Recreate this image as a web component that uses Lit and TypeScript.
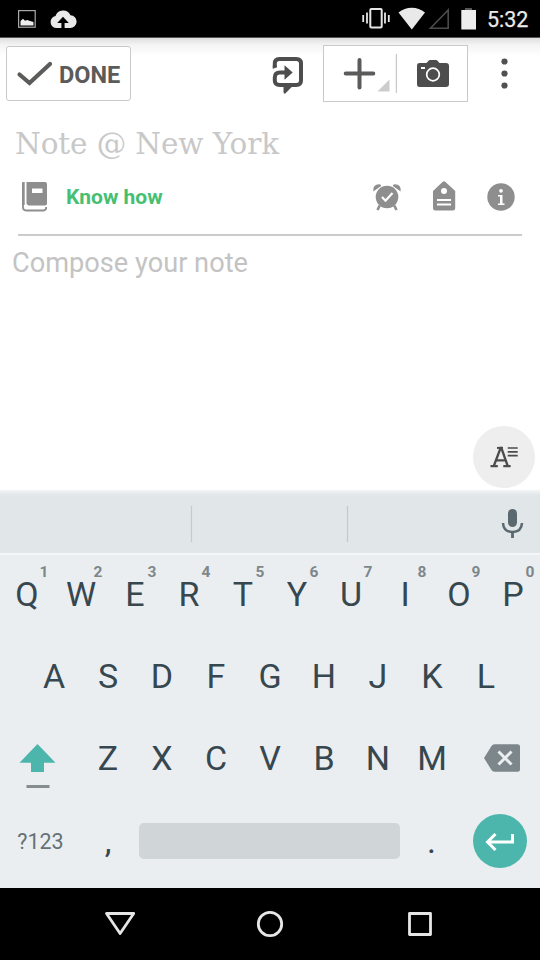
import { LitElement, html, svg, css, type TemplateResult } from "lit";
import { customElement, property } from "lit/decorators.js";

const icon = (x: number, y: number, w: number, h: number, body: TemplateResult) =>
  html`<svg width=${w} height=${h} viewBox="${x} ${y} ${w} ${h}" fill="none" aria-hidden="true">${body}</svg>`;

const base = css`
  :host { box-sizing: border-box; flex: none; }
  * { box-sizing: border-box; }
  svg { display: block; flex: none; }
`;

@customElement("status-bar")
class StatusBar extends LitElement {
  static styles = [base, css`
    :host { display: flex; height: 38px; background: #000; border-bottom: 1px solid #555; color: #e9e9e9; }
    .gap { flex: 1; }
    .time { width: 54px; font: 400 21.5px/38px Roboto, sans-serif; padding-left: 1px; padding-top: 1px; -webkit-text-stroke: .25px #e9e9e9; }
  `];
  render() {
    return html`
      ${icon(0, 0, 90, 37, svg`
        <rect x="18.6" y="10.6" width="16.6" height="16.6" stroke="#aaa" stroke-width="1.2"/>
        <path d="M20.500 25.500v-4.500l2.500-2.300 2 2 2.200-.7 2.800 1 3.500 1v3.500z" fill="#eee"/>
        <path d="M56.500 28a6 6 0 0 1-1-11.900 8 8 0 0 1 15-.9A6.400 6.400 0 0 1 70 28h-5.400v-5h4.200l-5.800-6.300-5.800 6.300h4.200v5z" fill="#e9e9e9"/>`)}
      <div class="gap"></div>
      ${icon(355, 0, 131, 37, svg`
        <rect x="370.300" y="9" width="11.400" height="18.600" rx="1" stroke="#e5e5e5" stroke-width="2"/>
        <path d="M367 12.500v11M385 12.500v11M363.200 15v7M388.800 15v7" stroke="#e5e5e5" stroke-width="1.800"/>
        <path d="M398.500 12.600a20.500 20.500 0 0 1 26.500 0L411.800 29.400z" fill="#e9e9e9"/>
        <path d="M448.200 10v18.300h-17.700z" stroke="#4b4b4b" stroke-width="1.600"/>
        <path d="M465 8h7v3h-7z" fill="#555"/><path d="M461.300 10h14.700v19.500h-14.700z" fill="#eee"/>`)}
      <div class="time">5:32</div>`;
  }
}

@customElement("note-toolbar")
class NoteToolbar extends LitElement {
  static styles = [base, css`
    :host { display: flex; align-items: flex-start; height: 74px; padding: 7px 0 0 6px; background: linear-gradient(#dedede, #f4f4f4 7px, #fff 18px); }
    .done { display: flex; align-items: center; width: 125px; height: 55px; margin-top: 1px; border: 1px solid #c9c9c9; border-radius: 3px; background: #fff; color: #5b5b59; font: 700 23.5px/50px Roboto, sans-serif; padding-left: 9px; gap: 5px; }
    .done span { padding-top: 2px; }
    .gap { flex: 1; }
    .group { display: flex; position: relative; width: 145px; height: 57px; border: 1.5px solid #c9c9c9; background: #fff; margin-left: 19px; }
    .more { margin-right: 24px; margin-left: 26px; }
  `];
  render() {
    return html`
      <div class="done">${icon(16, 58, 38, 32, svg`<path d="M19.500 74.500l10 8.500 20.500-19" stroke="#5b5b59" stroke-width="4.200" stroke-linecap="round" stroke-linejoin="miter"/>`)}<span>DONE</span></div>
      <div class="gap"></div>
      ${icon(272, 45, 32, 57, svg`
        <path d="M274.800 67.500v-4q0-4.500 4.500-4.500h17q4.700 0 4.700 4.500v17q0 4.500-4.700 4.500h-16.500q-5 0-5-4.500v-3q0-5 5-5h6" stroke="#4d4d4d" stroke-width="4"/>
        <path d="M272.800 65.500h4v1.500l-4 2z" fill="#4d4d4d"/>
        <path d="M284.500 65.300l8.200 7.200-8.200 7.200z" fill="#4d4d4d"/><path d="M283.500 86h9.200l-7.700 7.700q-1.500 0-1.500-1.700z" fill="#4d4d4d"/>`)}
      <div class="group">${icon(324, 46, 142, 54, svg`
        <path d="M359.500 60v27.500M345.700 73.600h27.600" stroke="#5b5b59" stroke-width="4" stroke-linecap="round"/>
        <path d="M389.500 79.500v12h-12z" fill="#ccc"/>
        <path d="M396.400 54v39" stroke="#c9c9c9" stroke-width="1.300"/>
        <path d="M419.500 63h7l2-2.200q.5-.8 1.500-.8h6q1 0 1.500.8l2 2.200h6.500q3 0 3 3v18q0 3-3 3h-26.500q-2.500 0-2.500-3V66q0-3 2.500-3z" fill="#4d4d4d"/>
        <circle cx="433" cy="74.500" r="6.300" stroke="#fff" stroke-width="1.700"/><path d="M421 67h4v2h-4z" fill="#fff"/>`)}</div>
      <div class="more">${icon(494, 45, 22, 57, svg`<g fill="#505050"><circle cx="504.500" cy="61.500" r="3.100"/><circle cx="504.500" cy="73.500" r="3.100"/><circle cx="504.500" cy="85.500" r="3.100"/></g>`)}</div>`;
  }
}

@customElement("note-editor")
class NoteEditor extends LitElement {
  static styles = [base, css`
    :host { display: flex; flex-direction: column; position: relative; height: 378px; background: #fff; font-family: Roboto, sans-serif; }
    .title { height: 64px; padding-left: 15px; font: 400 29.5px/64px "DejaVu Serif", serif; letter-spacing: -.12px; color: #c8c8c8; white-space: nowrap; }
    .meta { display: flex; align-items: center; height: 60px; margin: 0 18px; padding-bottom: 16px; border-bottom: 2px solid #cbcbcb; }
    .book { flex: 1; padding-left: 16px; font-weight: 700; font-size: 21px; color: #45c072; }
    .body { padding: 8px 12px; font-size: 27.200px; line-height: 38px; color: #c3c3c3; white-space: nowrap; }
    .format { position: absolute; right: 5px; bottom: 2px; width: 62px; height: 62px; border-radius: 50%; background: #eee; display: flex; }
  `];
  render() {
    return html`
      <div class="title">Note @ New York</div>
      <div class="meta">
        ${icon(18, 179, 32, 36, svg`
          <path d="M22 183q0-1 1-1h1.700v23H22zM26.500 182H45q2 0 2 2v19.500q0 2-2 2H28.500L26.500 204z" fill="#8e8e8e"/>
          <path d="M32 188.500h10.500v4.500H32z" fill="#fff"/>
          <path d="M23 203v4q0 3.500 3 3.500h17.500q2.700 0 2.700-3.500" stroke="#8e8e8e" stroke-width="1.800"/>`)}
        <div class="book">Know how</div>
        ${icon(372, 179, 150, 36, svg`
          <g fill="#8e8e8e"><circle cx="387" cy="197" r="11.300"/>
          <path d="M373.300 191.500q-1-7 6-7.300 2 0 1.800 1.700zM400.700 191.500q1-7-6-7.300-2 0-1.800 1.700z"/>
          <path d="M433 191l9.500-9q1.500-1.300 3 0l9.700 9v17q0 2.500-2.500 2.500h-17.200q-2.500 0-2.500-2.500z"/><circle cx="501" cy="197" r="13.700"/></g>
          <path d="M379.700 205.500l-2.200 4.500M394.300 205.500l2.200 4.500" stroke="#8e8e8e" stroke-width="2.600"/>
          <path d="M382 197l3.500 3.700 7-7.700" stroke="#fff" stroke-width="2.200"/>
          <circle cx="444" cy="191" r="3" fill="#fff"/><path d="M437 200h14M437 204.500h14" stroke="#fff" stroke-width="1.800"/>
          <circle cx="501" cy="190.800" r="1.900" fill="#fff"/><path d="M498 195h4.500v8.500h2v1.500H498v-1.500h2v-7h-2z" fill="#fff"/>`)}
      </div>
      <div class="body">Compose your note</div>
      <div class="format">${icon(473, 426, 62, 62, svg`
        <path d="M493.800 466l6.800-18h.8l6.300 18M496.500 460.300h9M490.500 466.200h7.300M503.300 466.200h7.300" stroke="#4c4c4c" stroke-width="2.300"/>
        <path d="M497 447.900h6" stroke="#4c4c4c" stroke-width="2"/>
        <path d="M507.700 448h10M507.700 451.800h10M507.700 455.600h10" stroke="#4c4c4c" stroke-width="1.700"/>`)}</div>`;
  }
}

@customElement("key-row")
class KeyRow extends LitElement {
  @property() keys = "";
  @property({ type: Boolean }) numbered = false;
  static styles = [base, css`
    :host { display: flex; height: 82px; }
    .key { position: relative; width: 54px; text-align: center; font: 400 34px/79px Roboto, sans-serif; color: #37474f; }
    .num { position: absolute; top: 8px; left: 34px; width: 20px; font: 700 15.500px/18px Roboto, sans-serif; color: #7d878b; }
  `];
  render() {
    return [...this.keys].map((k, i) => html`<div class="key">${k}${this.numbered ? html`<span class="num">${(i + 1) % 10}</span>` : ""}</div>`);
  }
}

@customElement("soft-keyboard")
class SoftKeyboard extends LitElement {
  static styles = [base, css`
    :host { display: block; height: 398px; background: #eaeef1; }
    .strip { height: 65px; background: linear-gradient(#f4f5f5, #e1e6e9 5px); border-bottom: 2px solid #f4f6f7; }
    .row { display: flex; justify-content: center; height: 82px; }
    .row.wide { justify-content: space-between; }
    .bottom { display: flex; align-items: center; height: 80px; font-family: Roboto, sans-serif; }
    .sym { width: 81px; text-align: center; font-size: 21.500px; color: #667175; }
    .punct { width: 54px; text-align: center; font-size: 34px; line-height: 80px; color: #37474f; }
    .space { width: 261px; height: 36px; margin: 0 4.500px 0 4px; border-radius: 5px; background: #d0d5d8; }
    .enter { display: flex; width: 54px; height: 54px; margin-left: 14px; border-radius: 50%; background: #4db6ac; }
  `];
  render() {
    return html`
      <div class="strip">${icon(0, 490, 540, 62, svg`
        <path d="M191.500 506v36M347.500 506v36" stroke="#c5cacd" stroke-width="1.200"/>
        <rect x="508" y="509" width="9" height="18" rx="4.500" fill="#5a686f"/>
        <path d="M503 523q.5 9 9.500 9t9.500-9" stroke="#5a686f" stroke-width="2.500"/><path d="M512.500 532v6" stroke="#5a686f" stroke-width="2.800"/>`)}</div>
      <div class="row"><key-row keys="QWERTYUIOP" numbered></key-row></div>
      <div class="row"><key-row keys="ASDFGHJKL"></key-row></div>
      <div class="row wide">
        ${icon(0, 719, 81, 82, svg`<path d="M37.500 744l18 18.800H44V772H31v-9.200H19.500z" fill="#4db6ac"/><path d="M26.500 786.500h23" stroke="#868d91" stroke-width="3"/>`)}
        <key-row keys="ZXCVBNM"></key-row>
        ${icon(459, 719, 81, 82, svg`<path d="M484 758l7.500-12q1-1.700 3-1.700h23q2.500 0 2.500 2.500v22.500q0 2.500-2.500 2.500h-23q-2 0-3-1.700z" fill="#7d878b"/><path d="M498.500 751.500l13 13M511.500 751.500l-13 13" stroke="#eaeef1" stroke-width="3"/>`)}
      </div>
      <div class="bottom">
        <div class="sym">?123</div><div class="punct">,</div><div class="space"></div><div class="punct">.</div>
        <div class="enter">${icon(472, 814, 54, 54, svg`<path d="M511.500 834v8h-24M494.500 834l-8 8 8 8" stroke="#fff" stroke-width="3"/>`)}</div>
      </div>`;
  }
}

@customElement("nav-bar")
class NavBar extends LitElement {
  static styles = [base, css`:host { display: block; height: 72px; background: #000; }`];
  render() {
    return icon(0, 888, 540, 72, svg`<g stroke="#e6e6e6" stroke-width="2.800" stroke-linejoin="round">
      <path d="M106.500 913.500h27.200l-13.600 20z"/><circle cx="270" cy="924" r="11.700"/><rect x="409.500" y="913.500" width="21" height="21"/></g>`);
  }
}

@customElement("app-root")
class AppRoot extends LitElement {
  static styles = css`:host { display: flex; flex-direction: column; width: 540px; height: 960px; overflow: hidden; background: #fff; }`;
  render() {
    return html`<status-bar></status-bar><note-toolbar></note-toolbar><note-editor></note-editor><soft-keyboard></soft-keyboard><nav-bar></nav-bar>`;
  }
}
